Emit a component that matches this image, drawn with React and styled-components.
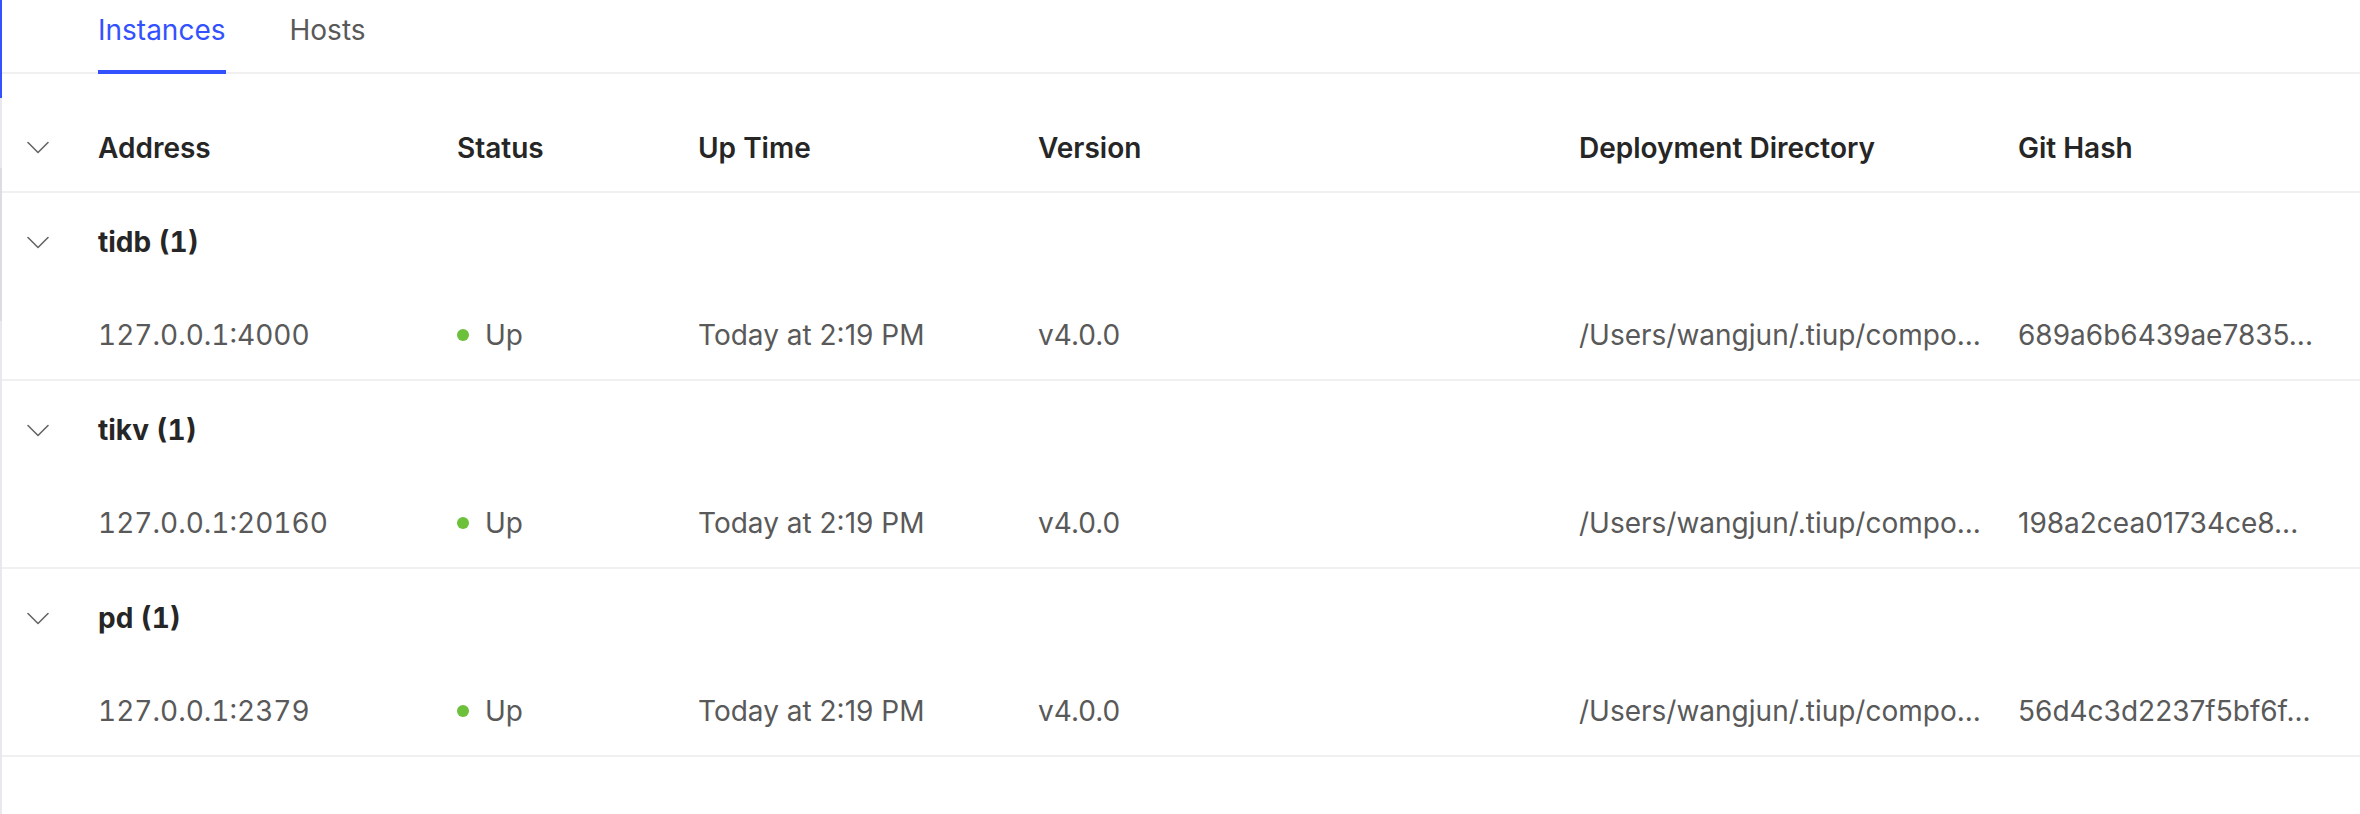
import React from "react";
import styled, { createGlobalStyle } from "styled-components";

const GlobalStyle = createGlobalStyle`
  html, body { margin: 0; padding: 0; background: #fff; }
  body { font-family: Inter, "Noto Sans", "Liberation Sans", sans-serif; -webkit-font-smoothing: antialiased; }
  * { box-sizing: border-box; }
`;

const Page = styled.div`
  display: flex;
  min-height: 814px;
  width: 2360px;
  background: #fff;
`;

const SideRail = styled.div`
  width: 2px;
  flex: none;
  display: flex;
  flex-direction: column;
  background: #e8e8ed;
`;

const RailSegment = styled.div`
  height: ${(p) => p.$h}px;
  background: ${(p) => p.$color};
`;

const Main = styled.div`
  flex: 1;
  min-width: 0;
  display: flex;
  flex-direction: column;
`;

const TabBar = styled.div`
  display: flex;
  gap: 64px;
  height: 74px;
  padding-left: 96px;
  border-bottom: 2px solid #f0f0f0;
`;

const Tab = styled.div`
  height: 74px;
  padding-top: 8px;
  line-height: 44px;
  font-size: 28px;
  color: ${(p) => (p.$active ? "#3351ff" : "#595959")};
  border-bottom: 4px solid ${(p) => (p.$active ? "#3351ff" : "transparent")};
  cursor: pointer;
  white-space: nowrap;
`;

const Table = styled.div`
  margin-top: 30px;
  display: flex;
  flex-direction: column;
`;

const Row = styled.div`
  display: grid;
  grid-template-columns: 64px 359px 241px 340px 541px 439px 374px;
  align-items: center;
  height: ${(p) => p.$h}px;
  border-bottom: ${(p) => (p.$border ? "2px solid #f0f0f0" : "none")};
  font-size: 28px;
  line-height: 44px;
`;

const ExpandCell = styled.div`
  display: flex;
  align-items: center;
  padding-left: 25px;
`;

const HeadCell = styled.div`
  padding: 0 32px;
  font-weight: 600;
  color: #262626;
  white-space: nowrap;
`;

const GroupCell = styled.div`
  grid-column: 2 / -1;
  padding: 0 32px;
  font-weight: 700;
  color: #262626;
  font-feature-settings: "tnum";
`;

const Cell = styled.div`
  padding: 0 4px 0 32px;
  color: #595959;
  white-space: nowrap;
  overflow: hidden;
  text-overflow: ellipsis;
  font-feature-settings: ${(p) => (p.$tnum ? '"tnum"' : "normal")};
`;

const StatusCell = styled(Cell)`
  display: flex;
  align-items: center;
`;

const Dot = styled.span`
  width: 12px;
  height: 12px;
  border-radius: 50%;
  background: #6cc03a;
  margin-right: 16px;
  flex: none;
`;

const Chevron = () => (
  <svg width="22" height="13" viewBox="0 0 22 13" fill="none">
    <path d="M1 1.5 L11 11.5 L21 1.5" stroke="#666" strokeWidth="1.6" strokeLinecap="round" strokeLinejoin="round" />
  </svg>
);

const groups = [
  {
    name: "tidb (1)",
    addr: "127.0.0.1:4000",
    hash: "689a6b6439ae7835...",
  },
  {
    name: "tikv (1)",
    addr: "127.0.0.1:20160",
    hash: "198a2cea01734ce8...",
  },
  {
    name: "pd (1)",
    addr: "127.0.0.1:2379",
    hash: "56d4c3d2237f5bf6f...",
  },
];

export default function App() {
  return (
    <>
      <GlobalStyle />
      <Page>
        <SideRail>
          <RailSegment $h={98} $color="#3351ff" />
          <RailSegment $h={70} $color="#e8e8ed" />
          <RailSegment $h={153} $color="#dcdce2" />
        </SideRail>
        <Main>
          <TabBar>
            <Tab $active>Instances</Tab>
            <Tab>Hosts</Tab>
          </TabBar>
          <Table>
            <Row $h={89} $border>
              <ExpandCell>
                <Chevron />
              </ExpandCell>
              <HeadCell>Address</HeadCell>
              <HeadCell>Status</HeadCell>
              <HeadCell>Up Time</HeadCell>
              <HeadCell>Version</HeadCell>
              <HeadCell>Deployment Directory</HeadCell>
              <HeadCell>Git Hash</HeadCell>
            </Row>
            {groups.map((g) => (
              <React.Fragment key={g.name}>
                <Row $h={98}>
                  <ExpandCell>
                    <Chevron />
                  </ExpandCell>
                  <GroupCell>{g.name}</GroupCell>
                </Row>
                <Row $h={90} $border>
                  <div />
                  <Cell $tnum>{g.addr}</Cell>
                  <StatusCell>
                    <Dot />
                    Up
                  </StatusCell>
                  <Cell>Today at 2:19 PM</Cell>
                  <Cell>v4.0.0</Cell>
                  <Cell>/Users/wangjun/.tiup/compo...</Cell>
                  <Cell>{g.hash}</Cell>
                </Row>
              </React.Fragment>
            ))}
          </Table>
        </Main>
      </Page>
    </>
  );
}
